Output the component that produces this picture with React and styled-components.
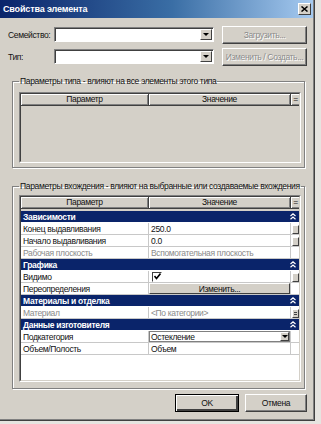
import React from "react";
import styled, { createGlobalStyle } from "styled-components";

const GlobalStyle = createGlobalStyle`
  body {
    margin: 0;
    background: #e6e4e0;
    font-family: "Liberation Sans", Arial, sans-serif;
    font-size: 8.5px;
    letter-spacing: -0.35px;
    color: #111;
  }
`;

const Window = styled.div`
  width: 315px;
  height: 421px;
  box-sizing: border-box;
  background: #d4d0c8;
  border-right: 1px solid #404040;
  border-bottom: 1px solid #404040;
  box-shadow: inset -1px -1px #808080;
  display: flex;
  flex-direction: column;
  overflow: hidden;
`;

const TitleBar = styled.div`
  height: 18px;
  margin-right: 1px;
  display: flex;
  align-items: center;
  justify-content: space-between;
  padding: 0 2px 0 3px;
  background: linear-gradient(to right, #0a246a, #3a6ea5 55%, #a6caf0);
  color: #fff;
  font-weight: bold;
  font-size: 9px;
  letter-spacing: -0.15px;
`;

const CloseBox = styled.div`
  width: 11px;
  height: 10px;
  background: #d4d0c8;
  border: 1px solid;
  border-color: #fff #404040 #404040 #fff;
  display: flex;
  align-items: center;
  justify-content: center;
`;

const Body = styled.div`
  flex: 1;
  min-width: 0;
  display: flex;
  flex-direction: column;
  padding: 7px 7px 0 8px;
`;

const FormRow = styled.div`
  display: grid;
  grid-template-columns: 46px 160px 85px;
  align-items: center;
  height: 19px;
  margin-bottom: ${(p) => p.$gap || 0}px;

  & > :last-child {
    margin-left: 8px;
  }
`;

const Label = styled.span`
  white-space: nowrap;
`;

const Combo = styled.div`
  height: 15px;
  box-sizing: border-box;
  background: #fff;
  border: 1px solid;
  border-color: #808080 #fff #fff #808080;
  box-shadow: inset 1px 1px #404040;
  display: flex;
  justify-content: flex-end;
  padding: 1px 1px 1px 0;
`;

const DropButton = styled.div`
  width: 12px;
  height: 100%;
  box-sizing: border-box;
  background: #d4d0c8;
  border: 1px solid;
  border-color: #fff #404040 #404040 #fff;
  display: flex;
  align-items: center;
  justify-content: center;
`;

const Arrow = styled.span`
  width: 0;
  height: 0;
  border-left: 3px solid transparent;
  border-right: 3px solid transparent;
  border-top: 3px solid #000;
`;

const Button = styled.div`
  height: ${(p) => p.$h || 18}px;
  width: ${(p) => p.$w || 85}px;
  box-sizing: border-box;
  background: #d4d0c8;
  border: 1px solid;
  border-color: ${(p) => (p.$default ? "#000" : "#fff #404040 #404040 #fff")};
  box-shadow: ${(p) =>
    p.$default
      ? "inset 1px 1px #fff, inset -2px -2px #404040, inset -1px -1px #808080"
      : "inset -1px -1px #808080"};
  display: flex;
  align-items: center;
  justify-content: center;
  white-space: nowrap;
  color: ${(p) => (p.$disabled ? "#8c8c8c" : "#111")};
  text-shadow: ${(p) => (p.$disabled ? "1px 1px #fff" : "none")};
`;

const Group = styled.fieldset`
  margin: ${(p) => p.$top || 0}px 0 0 4px;
  width: 293px;
  box-sizing: border-box;
  border: 1px solid #808080;
  box-shadow: inset 1px 1px #fff, 1px 1px #fff;
  padding: ${(p) => p.$padTop}px 3px ${(p) => p.$padBottom}px 6px;
  min-width: 0;
`;

const Legend = styled.legend`
  padding: 0 1px;
  margin-left: 0;
  white-space: nowrap;
  line-height: 10px;
`;

const TableFrame = styled.div`
  border: 1px solid;
  border-color: #808080 #fff #fff #808080;
`;

const TableInner = styled.div`
  height: ${(p) => p.$h}px;
  border: 1px solid;
  border-color: #404040 #d4d0c8 #d4d0c8 #404040;
  background: ${(p) => (p.$white ? "#fff" : "#d4d0c8")};
  overflow: hidden;
`;

const Row = styled.div`
  display: grid;
  grid-template-columns: 128px 142px 10px;
  height: ${(p) => p.$h || 12}px;
`;

const HeadCell = styled.div`
  background: #d4d0c8;
  border-right: 1px solid #404040;
  border-bottom: 1px solid #404040;
  box-shadow: inset 1px 1px #fff, inset -1px -1px #808080;
  display: flex;
  align-items: center;
  justify-content: center;
  line-height: 1;
`;

const Spacer = styled.div`
  height: 2px;
  background: #d4d0c8;
`;

const Category = styled.div`
  height: 11px;
  margin-bottom: 1px;
  background: #0a246a;
  color: #fff;
  font-weight: bold;
  letter-spacing: -0.3px;
  display: flex;
  align-items: center;
  justify-content: space-between;
  padding: 0 3px 0 2px;
`;

const Cell = styled.div`
  border-right: 1px solid #c8c8c8;
  border-bottom: 1px solid #c8c8c8;
  display: flex;
  align-items: center;
  padding-left: ${(p) => (p.$pad === undefined ? 2 : p.$pad)}px;
  white-space: nowrap;
  overflow: hidden;
  color: ${(p) => (p.$muted ? "#8a8a8a" : "#111")};
  background: #fff;
`;

const SideKnob = styled.div`
  width: 7px;
  height: 9px;
  margin: 1px 0 0 1px;
  box-sizing: border-box;
  background: #d4d0c8;
  border: 1px solid;
  border-color: #fff #404040 #404040 #fff;
  display: flex;
  flex-direction: column;
  justify-content: center;
  gap: 1px;
  align-items: center;
`;

const KnobLine = styled.span`
  width: 3px;
  height: 1px;
  background: #404040;
`;

const CheckWrap = styled.span`
  display: flex;
  padding-left: 3px;
`;

const CheckBox = styled.div`
  width: 10px;
  height: 10px;
  box-sizing: border-box;
  background: #fff;
  border: 1px solid;
  border-color: #404040 #fff #fff #404040;
  display: flex;
  align-items: center;
  justify-content: center;
`;

const CellButton = styled.div`
  flex: 1;
  height: 11px;
  box-sizing: border-box;
  background: #d4d0c8;
  border: 1px solid;
  border-color: #fff #404040 #404040 #fff;
  display: flex;
  align-items: center;
  justify-content: center;
`;

const CellCombo = styled.div`
  flex: 1;
  height: 11px;
  box-sizing: border-box;
  border: 1px solid #808080;
  display: flex;
  align-items: center;
  justify-content: space-between;
  padding-left: 1px;
`;

const MiniDrop = styled.div`
  width: 9px;
  height: 9px;
  box-sizing: border-box;
  background: #d4d0c8;
  border: 1px solid;
  border-color: #fff #404040 #404040 #fff;
  display: flex;
  align-items: center;
  justify-content: center;
`;

const Footer = styled.div`
  display: flex;
  justify-content: flex-end;
  gap: 6px;
  padding-top: 5px;
  width: 299px;
`;

const Chevrons = () => (
  <svg width="6" height="7" viewBox="0 0 6 7">
    <path d="M0.5 3 L3 0.8 L5.5 3 M0.5 6.2 L3 4 L5.5 6.2" stroke="#fff" strokeWidth="1.2" fill="none" />
  </svg>
);

const CloseX = () => (
  <svg width="7" height="6" viewBox="0 0 7 6">
    <path d="M0.5 0.5 L6.5 5.5 M6.5 0.5 L0.5 5.5" stroke="#000" strokeWidth="1.5" />
  </svg>
);

const Check = () => (
  <svg width="7" height="7" viewBox="0 0 7 7">
    <path d="M0.5 3 L2.5 5.5 L6.5 0.5" stroke="#000" strokeWidth="1.6" fill="none" />
  </svg>
);

const TableHeader = () => (
  <Row $h={12}>
    <HeadCell>Параметр</HeadCell>
    <HeadCell>Значение</HeadCell>
    <HeadCell>=</HeadCell>
  </Row>
);

const DataRow = ({ name, value, muted, side, children }) => (
  <Row>
    <Cell $muted={muted}>{name}</Cell>
    <Cell $muted={muted} $pad={children ? 0 : 2}>
      {children || value}
    </Cell>
    <Cell $pad={0}>
      {side === "knob" && <SideKnob />}
      {side === "lines" && (
        <SideKnob>
          <KnobLine />
          <KnobLine />
        </SideKnob>
      )}
    </Cell>
  </Row>
);

const CategoryRow = ({ title }) => (
  <Category>
    <span>{title}</span>
    <Chevrons />
  </Category>
);

export default function App() {
  return (
    <>
      <GlobalStyle />
      <Window>
        <TitleBar>
          <span>Свойства элемента</span>
          <CloseBox>
            <CloseX />
          </CloseBox>
        </TitleBar>
        <Body>
          <FormRow $gap={3}>
            <Label>Семейство:</Label>
            <Combo>
              <DropButton>
                <Arrow />
              </DropButton>
            </Combo>
            <Button $disabled>Загрузить...</Button>
          </FormRow>
          <FormRow $gap={10}>
            <Label>Тип:</Label>
            <Combo>
              <DropButton>
                <Arrow />
              </DropButton>
            </Combo>
            <Button $disabled>Изменить / Создать...</Button>
          </FormRow>

          <Group $padTop={6} $padBottom={4}>
            <Legend>Параметры типа - влияют на все элементы этого типа</Legend>
            <TableFrame>
              <TableInner $h={67}>
                <TableHeader />
              </TableInner>
            </TableFrame>
          </Group>

          <Group $top={13} $padTop={4} $padBottom={6}>
            <Legend>Параметры вхождения - влияют на выбранные или создаваемые вхождения</Legend>
            <TableFrame>
              <TableInner $h={183} $white>
                <TableHeader />
                <Spacer />
                <CategoryRow title="Зависимости" />
                <DataRow name="Конец выдавливания" value="250.0" side="knob" />
                <DataRow name="Начало выдавливания" value="0.0" side="knob" />
                <DataRow name="Рабочая плоскость" value="Вспомогательная плоскость" muted />
                <CategoryRow title="Графика" />
                <DataRow name="Видимо" side="knob">
                  <CheckWrap>
                    <CheckBox>
                      <Check />
                    </CheckBox>
                  </CheckWrap>
                </DataRow>
                <DataRow name="Переопределения">
                  <CellButton>Изменить...</CellButton>
                </DataRow>
                <CategoryRow title="Материалы и отделка" />
                <DataRow name="Материал" value="<По категории>" muted side="lines" />
                <CategoryRow title="Данные изготовителя" />
                <DataRow name="Подкатегория">
                  <CellCombo>
                    <span>Остекление</span>
                    <MiniDrop>
                      <Arrow />
                    </MiniDrop>
                  </CellCombo>
                </DataRow>
                <DataRow name="Объем/Полость" value="Объем" />
              </TableInner>
            </TableFrame>
          </Group>

          <Footer>
            <Button $default $w={64} $h={18}>OK</Button>
            <Button $w={62} $h={18}>Отмена</Button>
          </Footer>
        </Body>
      </Window>
    </>
  );
}
